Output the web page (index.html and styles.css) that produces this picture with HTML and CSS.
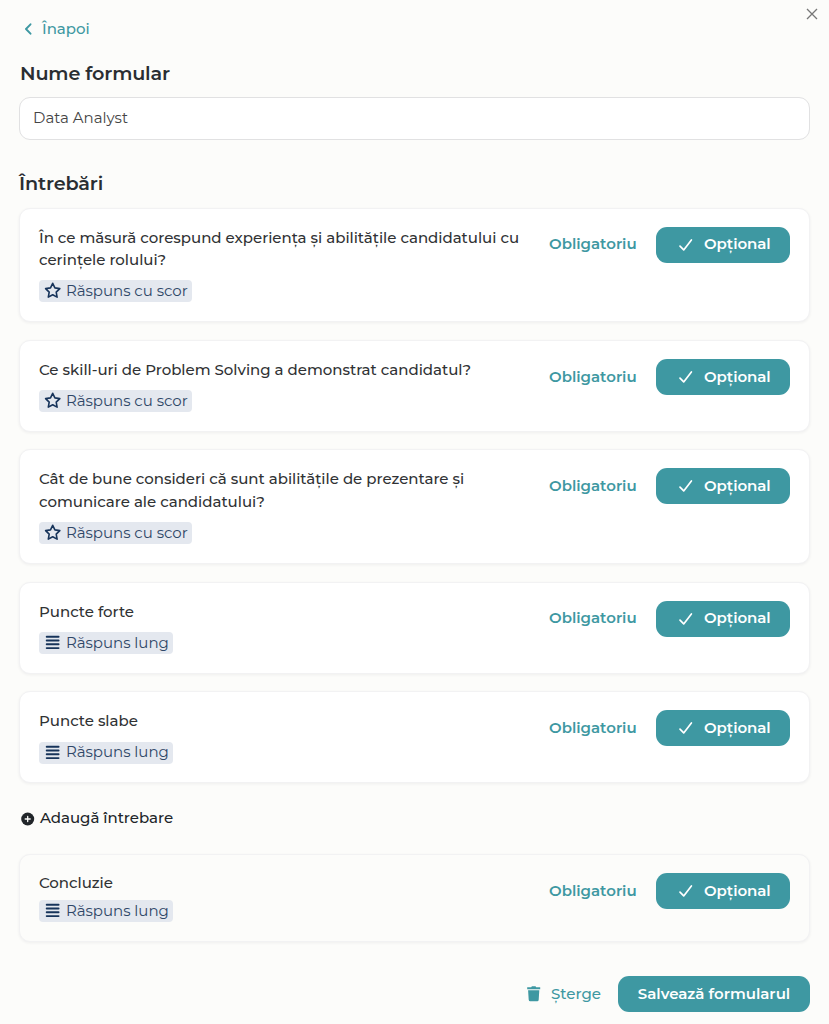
FILE: index.html
```html
<!DOCTYPE html>
<html lang="ro">
<head>
<meta charset="utf-8">
<title>Formular</title>
<link rel="stylesheet" href="styles.css">
</head>
<body>
<svg width="0" height="0" class="sprite" aria-hidden="true">
  <symbol id="star" viewBox="0 0 18 18"><path d="M8.700 1.300l2.200 4.600 4.900.7-3.600 3.500.9 5L8.700 12.700l-4.400 2.400.9-5L1.600 6.600l4.900-.7z" fill="none" stroke="currentColor" stroke-width="1.600" stroke-linejoin="round"/></symbol>
  <symbol id="lines" viewBox="0 0 18 18"><path d="M2.700 2.700h11.900M2.700 6.500h11.900M2.700 10.300h11.900M2.700 14.100h11.900" fill="none" stroke="currentColor" stroke-width="1.900" stroke-linecap="round"/></symbol>
  <symbol id="check" viewBox="0 0 16 16"><path d="M2 9.200l3.700 3.700L13.400 3" fill="none" stroke="currentColor" stroke-width="1.700" stroke-linecap="round" stroke-linejoin="round"/></symbol>
</svg>
<button class="close" aria-label="Închide"><svg width="12" height="12" viewBox="0 0 12 12"><path d="M1 1l10 10M11 1L1 11" stroke="currentColor" stroke-width="1.300" fill="none"/></svg></button>
<main class="form">
  <a class="back"><svg width="8" height="12" viewBox="0 0 8 12"><path d="M6.500 1.300L2 6l4.500 4.700" fill="none" stroke="currentColor" stroke-width="1.900" stroke-linecap="round" stroke-linejoin="round"/></svg><span>Înapoi</span></a>
  <h2 class="title title-name">Nume formular</h2>
  <div class="input">Data Analyst</div>
  <h2 class="title title-questions">Întrebări</h2>
  <section class="cards">
    <article class="card">
      <div class="body"><p class="question">În ce măsură corespund experiența și abilitățile candidatului cu<br>cerințele rolului?</p><span class="badge score"><svg><use href="#star"/></svg>Răspuns cu scor</span></div>
      <div class="choice"><span class="required">Obligatoriu</span><button class="optional"><svg><use href="#check"/></svg>Opțional</button></div>
    </article>
    <article class="card">
      <div class="body"><p class="question">Ce skill-uri de Problem Solving a demonstrat candidatul?</p><span class="badge score"><svg><use href="#star"/></svg>Răspuns cu scor</span></div>
      <div class="choice"><span class="required">Obligatoriu</span><button class="optional"><svg><use href="#check"/></svg>Opțional</button></div>
    </article>
    <article class="card">
      <div class="body"><p class="question">Cât de bune consideri că sunt abilitățile de prezentare și<br>comunicare ale candidatului?</p><span class="badge score"><svg><use href="#star"/></svg>Răspuns cu scor</span></div>
      <div class="choice"><span class="required">Obligatoriu</span><button class="optional"><svg><use href="#check"/></svg>Opțional</button></div>
    </article>
    <article class="card">
      <div class="body"><p class="question">Puncte forte</p><span class="badge long"><svg><use href="#lines"/></svg>Răspuns lung</span></div>
      <div class="choice"><span class="required">Obligatoriu</span><button class="optional"><svg><use href="#check"/></svg>Opțional</button></div>
    </article>
    <article class="card">
      <div class="body"><p class="question">Puncte slabe</p><span class="badge long"><svg><use href="#lines"/></svg>Răspuns lung</span></div>
      <div class="choice"><span class="required">Obligatoriu</span><button class="optional"><svg><use href="#check"/></svg>Opțional</button></div>
    </article>
  </section>
  <a class="add"><svg width="14" height="14" viewBox="0 0 14 14"><circle cx="6.700" cy="7" r="6.500" fill="currentColor"/><path d="M6.700 4.500v5M4.200 7h5" stroke="#fcfcfa" stroke-width="1.300" stroke-linecap="round"/></svg><span>Adaugă întrebare</span></a>
  <article class="card conclusion">
    <div class="body"><p class="question">Concluzie</p><span class="badge long"><svg><use href="#lines"/></svg>Răspuns lung</span></div>
    <div class="choice"><span class="required">Obligatoriu</span><button class="optional"><svg><use href="#check"/></svg>Opțional</button></div>
  </article>
  <footer class="actions">
    <a class="delete"><svg width="14" height="16" viewBox="0 0 14 16"><path d="M.2 1.200h4L4.900.3h3.600l.7.900h4v2H.2zM1.100 4.300h11.200l-.6 9.500q-.1 1.500-1.500 1.500h-7Q1.800 15.300 1.700 13.800z" fill="currentColor"/></svg><span>Șterge</span></a>
    <button class="save">Salvează formularul</button>
  </footer>
</main>
</body>
</html>
```

FILE: styles.css
```css
* { box-sizing: border-box; }
body { margin: 0; height: 1024px; overflow: hidden; background: #fcfcfa; color: #212529; font-family: Montserrat, Inter, "Open Sans", sans-serif; font-size: 15px; line-height: 22.5px; }
button { border: 0; font: inherit; }
.sprite { position: absolute; }
.close { position: absolute; top: 8px; right: 11px; padding: 0; width: 12px; height: 12px; display: flex; background: none; color: #777; }
.form { padding: 18px 19px 0; }
.back { display: flex; align-items: center; gap: 10px; height: 22px; padding-left: 5px; color: #3e98a2; font-weight: 500; }
.title { margin: 0; font-size: 19.2px; line-height: 26px; font-weight: 600; letter-spacing: -.15px; color: #2a2e32; }
.title-name { margin-top: 20px; padding-left: 1px; }
.input { margin-top: 10.500px; height: 43px; padding: 0 13px; display: flex; align-items: center; border: 1px solid #e1e1e2; border-radius: 11px; background: #fff; color: #454545; }
.title-questions { margin-top: 30.500px; }
.cards { display: flex; flex-direction: column; gap: 17.800px; margin-top: 11.600px; }
.card { display: flex; justify-content: space-between; align-items: flex-start; padding: 18px 19px 18.500px; border: 1px solid #f2f2f3; border-radius: 11px; background: #fff; box-shadow: 0 1px 3px rgba(30, 30, 50, .06); }
.body { display: flex; flex-direction: column; align-items: flex-start; }
.question { margin: 0; color: #303234; font-weight: 500; letter-spacing: -.02px; white-space: nowrap; }
.badge { display: flex; align-items: center; gap: 4px; height: 22px; margin-top: 8.900px; padding-left: 5px; border-radius: 4px; background: #e4e8ef; color: #2f4767; white-space: nowrap; letter-spacing: -.03px; }
.badge svg { flex: none; width: 18px; height: 18px; color: #17345b; }
.score { width: 153px; }
.long { width: 134px; }
.choice { display: flex; align-items: center; gap: 20px; }
.required { width: 87px; color: #3e98a2; font-weight: 600; white-space: nowrap; }
.optional { display: flex; align-items: center; width: 134px; height: 36px; gap: 10px; padding: 0 0 0 22px; border-radius: 11px; background: #3e98a2; color: #fff; font-weight: 600; letter-spacing: -.05px; }
.optional svg { width: 16px; height: 16px; }
.add { display: flex; align-items: center; gap: 5px; height: 22px; margin-top: 24.400px; padding-left: 2px; font-weight: 500; letter-spacing: -.04px; }
.conclusion { margin-top: 24.200px; background: #fcfcfa; }
.conclusion .body { margin-top: -1px; }
.conclusion .badge { margin-top: 6px; }
.actions { display: flex; justify-content: flex-end; align-items: center; gap: 17px; margin-top: 34.200px; }
.delete { display: flex; align-items: center; gap: 10px; color: #3e98a2; font-weight: 500; }
.delete span { width: 50px; }
.save { width: 192px; height: 36px; border-radius: 11px; padding: 0; background: #3e98a2; color: #fff; font-weight: 600; white-space: nowrap; }
```
